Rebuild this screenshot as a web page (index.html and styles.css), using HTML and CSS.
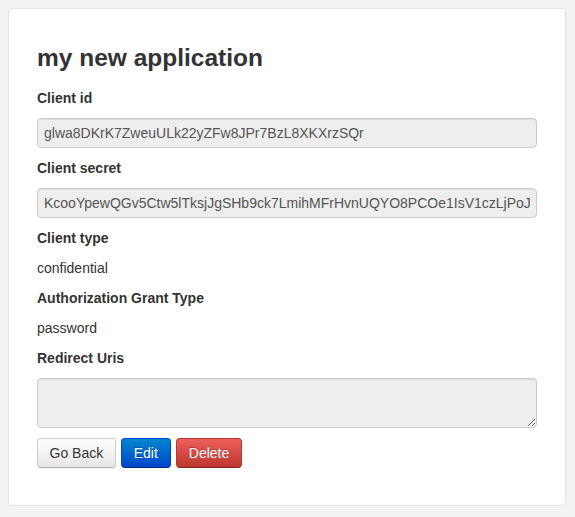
FILE: index.html
```html
<!DOCTYPE html>
<html>
<head>
<meta charset="utf-8">
<title>my new application</title>
<link rel="stylesheet" href="styles.css">
</head>
<body>
<div class="card">
  <h3 class="title">my new application</h3>
  <div class="field">
    <div class="label">Client id</div>
    <input class="input" type="text" readonly value="glwa8DKrK7ZweuULk22yZFw8JPr7BzL8XKXrzSQr">
  </div>
  <div class="field">
    <div class="label">Client secret</div>
    <input class="input" type="text" readonly value="KcooYpewQGv5Ctw5lTksjJgSHb9ck7LmihMFrHvnUQYO8PCOe1IsV1czLjPoJ">
  </div>
  <div class="label">Client type</div>
  <div class="value">confidential</div>
  <div class="label">Authorization Grant Type</div>
  <div class="value">password</div>
  <div class="field">
    <div class="label">Redirect Uris</div>
    <textarea class="textarea" readonly></textarea>
  </div>
  <div class="actions">
    <button class="btn btn-default">Go Back</button>
    <button class="btn btn-primary">Edit</button>
    <button class="btn btn-danger">Delete</button>
  </div>
</div>
</body>
</html>
```
FILE: styles.css
```css
html, body {
  margin: 0;
  padding: 0;
}
body {
  background: #f3f3f3;
  padding: 8px 9px 8px 8px;
  font-family: "Liberation Sans", Arial, sans-serif;
  font-size: 14px;
  line-height: 20px;
  color: #333;
}
.card {
  background: #fff;
  border: 1px solid #e3e3e3;
  border-radius: 4px;
  padding: 29px 28px 37px 28px;
  display: flex;
  flex-direction: column;
  gap: 10px;
}
.title {
  margin: 0;
  font-size: 24.5px;
  line-height: 40px;
  font-weight: bold;
  color: #333;
}
.field {
  display: flex;
  flex-direction: column;
  gap: 10px;
}
.label {
  font-weight: bold;
  line-height: 20px;
}
.value {
  line-height: 20px;
}
.input, .textarea {
  box-sizing: border-box;
  width: 100%;
  margin: 0;
  background: #eeeeee;
  border: 1px solid #cccccc;
  border-radius: 4px;
  box-shadow: inset 0 1px 1px rgba(0,0,0,0.075);
  font-family: "Liberation Sans", Arial, sans-serif;
  font-size: 14px;
  color: #555;
  padding: 4px 6px;
  outline: none;
}
.input {
  height: 30px;
  line-height: 20px;
}
.textarea {
  height: 50px;
  display: block;
  resize: vertical;
}
.actions {
  display: flex;
  gap: 5px;
}
.btn {
  font-family: "Liberation Sans", Arial, sans-serif;
  font-size: 14px;
  line-height: 20px;
  padding: 4px 12px;
  border-radius: 4px;
  border: 1px solid #ccc;
  cursor: pointer;
  margin: 0;
}
.btn-default {
  padding: 4px 11.5px;
  color: #333;
  background: linear-gradient(to bottom, #ffffff, #e6e6e6);
  border-color: #cccccc #cccccc #b3b3b3;
  box-shadow: inset 0 1px 0 rgba(255,255,255,0.2), 0 1px 2px rgba(0,0,0,0.05);
  text-shadow: 0 1px 1px rgba(255,255,255,0.75);
}
.btn-primary {
  color: #fff;
  background: linear-gradient(to bottom, #0088cc, #0044cc);
  border-color: #0044cc #0044cc #002a80;
  text-shadow: 0 -1px 0 rgba(0,0,0,0.25);
}
.btn-danger {
  color: #fff;
  background: linear-gradient(to bottom, #ee5f5b, #bd362f);
  border-color: #bd362f #bd362f #802420;
  text-shadow: 0 -1px 0 rgba(0,0,0,0.25);
}
```
